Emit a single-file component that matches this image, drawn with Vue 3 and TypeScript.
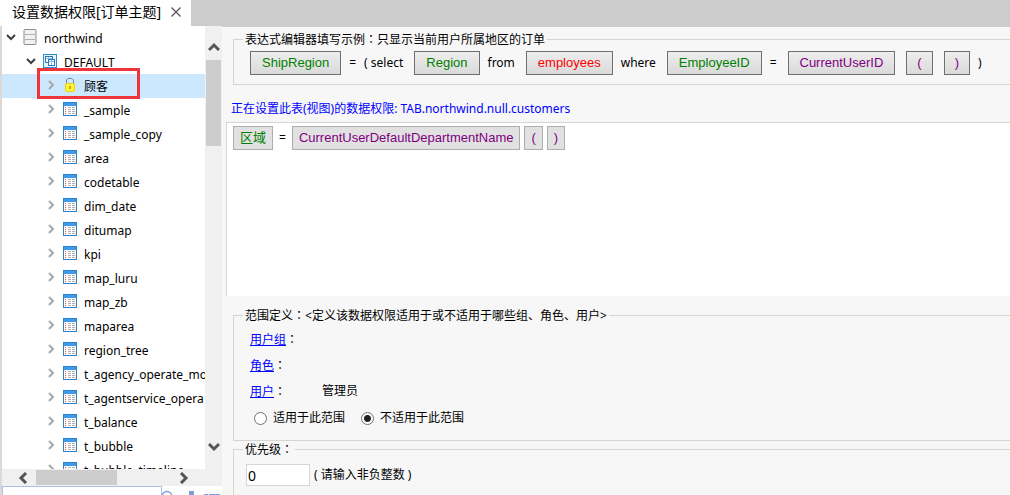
<script setup lang="ts">
import { ref } from 'vue'

interface Token {
  text: string
  kind: 'field' | 'table' | 'func' | 'paren' | 'word'
}

const tables: string[] = [
  '_sample', '_sample_copy', 'area', 'codetable', 'dim_date', 'ditumap', 'kpi',
  'map_luru', 'map_zb', 'maparea', 'region_tree', 't_agency_operate_mo',
  't_agentservice_opera', 't_balance', 't_bubble', 't_bubble_timeline',
]

const example: Token[] = [
  { text: 'ShipRegion', kind: 'field' },
  { text: '=', kind: 'word' },
  { text: '( select', kind: 'word' },
  { text: 'Region', kind: 'field' },
  { text: 'from', kind: 'word' },
  { text: 'employees', kind: 'table' },
  { text: 'where', kind: 'word' },
  { text: 'EmployeeID', kind: 'field' },
  { text: '=', kind: 'word' },
  { text: 'CurrentUserID', kind: 'func' },
  { text: '(', kind: 'paren' },
  { text: ')', kind: 'paren' },
  { text: ')', kind: 'word' },
]

const expression: Token[] = [
  { text: '区域', kind: 'field' },
  { text: '=', kind: 'word' },
  { text: 'CurrentUserDefaultDepartmentName', kind: 'func' },
  { text: '(', kind: 'paren' },
  { text: ')', kind: 'paren' },
]

const scope = ref<string>('exclude')
const priority = ref<string>('0')
const search = ref<string>('')
</script>

<template>
  <div class="window">
    <header class="tabs">
      <div class="tab">
        <span>设置数据权限[订单主题]</span>
        <button class="close" aria-label="关闭">
          <svg width="10" height="10" viewBox="0 0 10 10"><path d="M.5 .5l9 9M9.500 .5l-9 9" stroke="#555" stroke-width="1.300" fill="none" /></svg>
        </button>
      </div>
    </header>

    <div class="body">
      <aside class="side">
        <div class="tree-area">
          <ul class="tree">
            <li class="node root">
              <svg class="arrow" width="10" height="10" viewBox="0 0 10 10"><path d="M1 3l4 4 4-4" stroke="#404040" stroke-width="2" fill="none" /></svg>
              <svg class="icon" width="14" height="16" viewBox="0 0 14 16"><rect x="1" y=".5" width="12" height="15" rx="1" fill="#f1f1f1" stroke="#8c8c8c" /><path d="M2 5.500h10M2 10.500h10" stroke="#b0b0b0" /></svg>
              <span class="name">northwind</span>
            </li>
            <li class="node schema">
              <svg class="arrow" width="10" height="10" viewBox="0 0 10 10"><path d="M1 3l4 4 4-4" stroke="#404040" stroke-width="2" fill="none" /></svg>
              <svg class="icon" width="14" height="14" viewBox="0 0 14 14"><rect x=".5" y=".5" width="13" height="13" fill="#e8f4fd" stroke="#2b8fd6" /><rect x="2.500" y="2.500" width="7" height="6" fill="#fff" stroke="#2779bd" /><path d="M3 4.500h6M5.500 3v5" stroke="#8dbde2" /><rect x="5.500" y="5.500" width="6" height="6" fill="#fff" stroke="#2779bd" /><path d="M6 7.500h5M8.500 6v5" stroke="#8dbde2" /></svg>
              <span class="name">DEFAULT</span>
            </li>
            <li class="node leaf selected">
              <svg class="arrow" width="10" height="10" viewBox="0 0 10 10"><path d="M3 1l4 4-4 4" stroke="#a6a6a6" stroke-width="2" fill="none" /></svg>
              <svg class="icon" width="14" height="14" viewBox="0 0 14 14"><path d="M3.500 6V2l1.500-1.500h4L10.500 2v4" fill="none" stroke="#7d8790" /><rect x="2.500" y="5.500" width="9" height="8" rx="1" fill="#fff533" stroke="#e6d020" /><path d="M6 8h2v3h-2z" fill="#d9a514" /></svg>
              <span class="name">顾客</span>
              <span class="marker"></span>
            </li>
            <li v-for="name in tables" :key="name" class="node leaf">
              <svg class="arrow" width="10" height="10" viewBox="0 0 10 10"><path d="M3 1l4 4-4 4" stroke="#a6a6a6" stroke-width="2" fill="none" /></svg>
              <svg class="icon" width="14" height="14" viewBox="0 0 14 14"><rect x=".5" y=".5" width="13" height="13" fill="#fff" stroke="#2b82c9" /><rect x="1" y="1" width="12" height="3" fill="#3f9bea" /><path d="M2 5.500h1M2 7.500h1M2 9.500h1M2 11.500h1" stroke="#d2583f" /><path d="M5 5.500h3M9 5.500h3M5 7.500h3M9 7.500h3M5 9.500h3M9 9.500h3M5 11.500h3M9 11.500h3" stroke="#b0b0b0" /></svg>
              <span class="name">{{ name }}</span>
            </li>
          </ul>
          <div class="vbar">
            <svg width="12" height="10" viewBox="0 0 12 10"><path d="M1 8l5-5 5 5" stroke="#555" stroke-width="3" fill="none" /></svg>
            <div class="vthumb"></div>
            <svg class="end" width="12" height="10" viewBox="0 0 12 10"><path d="M1 2l5 5 5-5" stroke="#555" stroke-width="3" fill="none" /></svg>
          </div>
        </div>
        <div class="hbar">
          <svg width="10" height="12" viewBox="0 0 10 12"><path d="M8 1L3 6l5 5" stroke="#555" stroke-width="3" fill="none" /></svg>
          <div class="hthumb"></div>
          <svg class="end" width="10" height="12" viewBox="0 0 10 12"><path d="M2 1l5 5-5 5" stroke="#555" stroke-width="3" fill="none" /></svg>
        </div>
        <div class="search">
          <input v-model="search" type="text" aria-label="搜索" />
          <svg width="60" height="9" viewBox="0 0 60 9"><circle cx="5" cy="10.500" r="5" fill="none" stroke="#7d9cd8" stroke-width="1.300" /><path d="M27 5h5v4h-5z" fill="#7d9cd8" /><path d="M42 8.500h4M47 8.500h11" stroke="#7d9cd8" /></svg>
        </div>
      </aside>

      <main class="main">
        <fieldset class="box example">
          <legend>表达式编辑器填写示例<span class="colon">：</span>只显示当前用户所属地区的订单</legend>
          <div class="tokens">
            <template v-for="(t, i) in example" :key="i">
              <span v-if="t.kind === 'word'" class="word">{{ t.text }}</span>
              <button v-else class="token" :class="t.kind">{{ t.text }}</button>
            </template>
          </div>
        </fieldset>

        <p class="current">正在设置此表(视图)的数据权限: TAB.northwind.null.customers</p>

        <div class="editor">
          <template v-for="(t, i) in expression" :key="i">
            <span v-if="t.kind === 'word'" class="word">{{ t.text }}</span>
            <button v-else class="token" :class="t.kind">{{ t.text }}</button>
          </template>
        </div>

        <fieldset class="box scope">
          <legend>范围定义<span class="colon">：</span>&lt;定义该数据权限适用于或不适用于哪些组、角色、用户&gt;</legend>
          <div class="lines">
            <div class="line"><span class="key"><a href="#">用户组</a><span class="colon">：</span></span></div>
            <div class="line"><span class="key"><a href="#">角色</a><span class="colon">：</span></span></div>
            <div class="line"><span class="key"><a href="#">用户</a><span class="colon">：</span></span><span>管理员</span></div>
          </div>
          <div class="radios">
            <label><input v-model="scope" type="radio" name="scope" value="include" />适用于此范围</label>
            <label><input v-model="scope" type="radio" name="scope" value="exclude" />不适用于此范围</label>
          </div>
        </fieldset>

        <fieldset class="box priority">
          <legend>优先级<span class="colon">：</span></legend>
          <label><input v-model="priority" type="text" />( 请输入非负整数 )</label>
        </fieldset>
      </main>
    </div>
  </div>
</template>

<style>
body {
  margin: 0;
  overflow: hidden;
}
</style>

<style scoped>
.window {
  display: flex;
  flex-direction: column;
  height: 100vh;
  overflow: hidden;
  background: #f7f7f7;
  color: #000;
  font: 12px/16px "Noto Sans", "Noto Sans CJK SC", sans-serif;
}
.window * { box-sizing: border-box; }
button, input { font: inherit; margin: 0; }
.colon { font-family: "Noto Sans CJK TC", sans-serif; }

.tabs {
  flex: none;
  display: flex;
  height: 26px;
  background: #ccc;
}
.tab {
  display: flex;
  align-items: center;
  gap: 10px;
  padding: 0 10px 2px 12px;
  background: #fff;
  font-size: 14px;
}
.close {
  display: flex;
  padding: 0;
  border: 0;
  background: none;
}

.body { flex: 1; display: flex; min-height: 0; }

.side {
  flex: none;
  display: flex;
  flex-direction: column;
  width: 222px;
  border-left: 2px solid #ddd8d4;
  background: #fff;
}
.tree-area { flex: 1; display: flex; min-height: 0; }
.tree {
  flex: 1;
  min-width: 0;
  margin: 0;
  padding: 0;
  overflow: hidden;
  list-style: none;
}
.node {
  position: relative;
  display: flex;
  align-items: center;
  height: 24px;
  white-space: nowrap;
}
.node svg { flex: none; }
.name { padding-top: 2px; }
.root { padding-left: 4px; }
.schema { padding-left: 24px; }
.leaf { padding-left: 44px; }
.arrow { margin-right: 7px; margin-bottom: 2px; }
.icon { margin-right: 7px; margin-bottom: 2px; }
.selected { background: #cce8ff; }
.marker {
  position: absolute;
  left: 35px;
  top: -6px;
  width: 103px;
  height: 31px;
  border: 3px solid #f0353a;
}
.vbar {
  display: flex;
  flex-direction: column;
  align-items: center;
  width: 17px;
  padding: 16px 0 17px;
  background: #f0f0f0;
}
.vthumb { width: 15px; height: 86px; margin-top: 8px; background: #cdcdcd; }
.vbar .end { margin-top: auto; }
.hbar {
  display: flex;
  align-items: center;
  height: 17px;
  padding: 0 33px 0 16px;
  background: #f0f0f0;
}
.hthumb { width: 81px; height: 15px; margin-left: 8px; background: #cdcdcd; }
.hbar .end { margin-left: auto; }
.search { display: flex; height: 9px; overflow: hidden; }
.search input {
  width: 160px;
  height: 22px;
  border: 1px solid #a9bfe8;
  background: #fff;
  outline: 0;
}

.main {
  flex: 1;
  display: flex;
  flex-direction: column;
  min-width: 0;
  padding-left: 4px;
  border-top: 1px solid #ccc;
}
.box {
  flex: none;
  min-width: 0;
  margin: 0 0 0 7px;
  border: 1px solid #d6d6d0;
  border-right: 0;
  padding: 0 0 0 9px;
}
legend { padding: 0 2px; }
.example { margin-top: 4px; height: 54px; }
.tokens {
  display: flex;
  align-items: center;
  margin-top: 3px;
  margin-left: -4px;
  white-space: nowrap;
}
.word { margin-left: 8px; }
.token {
  height: 24px;
  padding: 0 11px;
  border: 1px solid #707070;
  background: linear-gradient(#ededed, #dadada);
  font: 13px/20px "Liberation Sans", "Noto Sans CJK SC", sans-serif;
}
.tokens .token { margin-left: 11px; }
.tokens .paren { padding: 0 10px; }
.field { color: green; }
.table { color: red; }
.func, .paren { color: purple; }

.current { flex: none; margin: 16px 0 5px 5px; color: #00f; }

.editor {
  flex: 1;
  display: flex;
  align-items: flex-start;
  gap: 4px;
  padding: 3px 6px;
  border: 1px solid #d6d6d0;
  border-width: 1px 0 0 1px;
  background: #fff;
}
.editor .token { padding: 0 6px; border-color: #adadad; background: #e1e1e1; }
.editor .word { margin: 4px 2px; }

.scope { margin-top: 11px; height: 134px; }
.lines { padding-top: 2px; }
.line { display: flex; height: 26px; align-items: center; margin-left: 7px; }
.scope .key { width: 72px; }
a { color: #00f; }
.radios { display: flex; gap: 16px; margin: 6px 0 0 11px; }
.radios label { display: flex; align-items: center; }
.radios input {
  appearance: none;
  width: 13px;
  height: 13px;
  margin-right: 6px;
  border: 1px solid #707070;
  border-radius: 50%;
  background: #fff;
}
.radios input:checked { background: radial-gradient(circle, #222 0 3px, #fff 4px); }

.priority { height: 54px; border-bottom: 0; }
.priority label { display: flex; align-items: center; gap: 4px; margin: 6px 0 0 3px; }
.priority input {
  width: 64px;
  height: 22px;
  padding: 0 1px;
  border: 1px solid #d6d6d0;
  background: #fff;
  font-size: 14px;
}
</style>
